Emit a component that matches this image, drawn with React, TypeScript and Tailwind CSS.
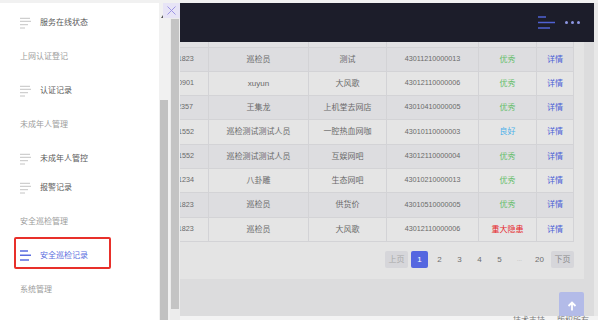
import React from "react";

type Row = { phone: string; name: string; place: string; id: string; status: string };

const rows: Row[] = [
  { phone: "13807311823", name: "巡检员", place: "测试", id: "43011210000013", status: "优秀" },
  { phone: "18673140901", name: "xuyun", place: "大风歌", id: "43012110000006", status: "优秀" },
  { phone: "15111112357", name: "王集龙", place: "上机堂去网店", id: "43010410000005", status: "优秀" },
  { phone: "13974881552", name: "巡检测试测试人员", place: "一腔热血网咖", id: "43010110000003", status: "良好" },
  { phone: "13974881552", name: "巡检测试测试人员", place: "互娱网吧", id: "43012110000004", status: "优秀" },
  { phone: "13900001234", name: "八卦雕", place: "生态网吧", id: "43010210000013", status: "优秀" },
  { phone: "13807311823", name: "巡检员", place: "供货价", id: "43010510000005", status: "优秀" },
  { phone: "13807311823", name: "巡检员", place: "大风歌", id: "43012110000006", status: "重大隐患" },
];

const statusClass: Record<string, string> = {
  优秀: "text-[#62bd68]",
  良好: "text-[#4fb2ea]",
  重大隐患: "text-[#e5262a]",
};

const rowHeights = ["h-[24px]", "h-[24px]", "h-[24px]", "h-[25px]", "h-[24px]", "h-[24px]", "h-[25px]", "h-[24px]"];

function MenuIcon({ active }: { active?: boolean }) {
  if (active) {
    return (
      <svg width="12" height="12" viewBox="0 0 12 12" className="shrink-0">
        <path d="M0 1h8M0 5.3h11M0 10h9" stroke="#5b6de0" strokeWidth="1.5" />
      </svg>
    );
  }
  return (
    <svg width="12" height="12" viewBox="0 0 12 12" className="shrink-0">
      <path d="M0 1.3h10M0 4.3h11M0 7.7h8M0 11h5" stroke="#c4c4c4" strokeWidth="1" />
    </svg>
  );
}

function Item({ label, active }: { label: string; active?: boolean }) {
  return (
    <div className="relative h-[29px] flex items-center pl-[20px]">
      <MenuIcon active={active} />
      <span className={`ml-[8px] text-[8px] leading-[8px] ${active ? "text-[#5b6de0]" : "text-[#5a5a5a]"}`}>{label}</span>
      {active && (
        <div className="absolute left-[14px] top-[-4px] w-[97px] h-[32px] border-2 border-[#e8302a] rounded-[2px]" />
      )}
    </div>
  );
}

function Group({ label }: { label: string }) {
  return (
    <div className="h-[39px] flex items-center pl-[20px] text-[8px] leading-[8px] text-[#9c9c9c]">{label}</div>
  );
}

export default function App() {
  const cell = "flex items-center justify-center border-r border-[#d3d3d6] whitespace-nowrap overflow-hidden";
  return (
    <div
      className="relative w-[598px] h-[320px] overflow-hidden bg-[#f1f1f1]"
      style={{ fontFamily: '"Liberation Sans", "Noto Sans CJK SC", sans-serif' }}
    >
      {/* main page under the overlay */}
      <div className="flex flex-col h-full">
        <div className="h-[3px] bg-[#f1f1f1]" />
        <div className="flex flex-1 min-h-0">
          <div className="w-[594px] flex flex-col">
            {/* dark header */}
            <div className="h-[39px] bg-[#1c1d2a] flex items-center justify-end pr-[14px]">
              <svg width="18" height="13" viewBox="0 0 18 13" className="mt-[0px]">
                <path d="M0 1h8M0 6.5h17M0 12h12" stroke="#4f62d4" strokeWidth="1.6" />
              </svg>
              <div className="flex gap-[3.2px] ml-[9px]">
                <span className="w-[3px] h-[3px] rounded-full bg-[#8c96e2]" />
                <span className="w-[3px] h-[3px] rounded-full bg-[#8c96e2]" />
                <span className="w-[3px] h-[3px] rounded-full bg-[#8c96e2]" />
              </div>
            </div>
            {/* body */}
            <div className="flex-1 bg-[#dcdcdd]">
              <div className="ml-[10px] mr-[10px] bg-[#e4e4e4] pl-[10px] pr-[10px]">
                <div className="grid grid-cols-[116px_73px_100px_78px_92px_58px_37px] h-[6px] bg-[#e1e1e3] border-b border-[#d3d3d6]">
                  {[0, 1, 2, 3, 4, 5, 6].map((i) => (
                    <div key={i} className="border-r border-[#d3d3d6]" />
                  ))}
                </div>
                {rows.map((r, i) => (
                  <div
                    key={i}
                    className={`grid grid-cols-[116px_73px_100px_78px_92px_58px_37px] ${rowHeights[i]} border-b border-[#d3d3d6] ${i % 2 === 0 ? "bg-[#dddde0]" : "bg-[#e5e5e5]"}`}
                  >
                    <div className={`${cell}`} />
                    <div className={`${cell} text-[7.2px] text-[#6a6a6a]`}>{r.phone}</div>
                    <div className={`${cell} text-[8px] text-[#6a6a6a]`}>{r.name}</div>
                    <div className={`${cell} text-[8px] text-[#6a6a6a]`}>{r.place}</div>
                    <div className={`${cell} text-[7.2px] text-[#6a6a6a]`}>{r.id}</div>
                    <div className={`${cell} text-[8px] ${statusClass[r.status]}`}>{r.status}</div>
                    <div className={`${cell} text-[8px] text-[#4a5fd6]`}>详情</div>
                  </div>
                ))}
                {/* pagination */}
                <div className="flex justify-end gap-[3px] pt-[9px] pb-[11px] text-[8px]">
                  <div className="w-[23px] h-[17px] flex items-center justify-center rounded-[2px] bg-[#d6d6da] text-[#a9a9a9]">上页</div>
                  <div className="w-[17px] h-[17px] flex items-center justify-center rounded-[2px] bg-[#5567e0] text-white">1</div>
                  {["2", "3", "4", "5", "...", "20"].map((p) => (
                    <div key={p} className="w-[17px] h-[17px] flex items-center justify-center text-[#6e6e6e]">
                      {p === "..." ? <span className="text-[#b0b0b0] text-[6px]">...</span> : p}
                    </div>
                  ))}
                  <div className="w-[23px] h-[17px] flex items-center justify-center rounded-[2px] bg-[#d6d6da] text-[#8a8a8a]">下页</div>
                </div>
              </div>
            </div>
          </div>
          <div className="w-[4px] bg-[#e8e8e8]" />
        </div>
        <div className="relative z-20 h-[4px] bg-[#f3f3f3] flex text-[8px] leading-[8px] text-[#7a7a7a] pt-[1px]">
          <span className="ml-[513px]">技术支持</span>
          <span className="ml-[12px]">版权所有</span>
        </div>
      </div>

      {/* back to top */}
      <div className="absolute left-[559px] top-[292px] w-[25px] h-[28px] rounded-[2px] bg-[#b3bbe8] flex justify-center pt-[9px] z-10">
        <svg width="10" height="10" viewBox="0 0 10 10">
          <path d="M5 9.5V1.5M1.5 5L5 1.5L8.5 5" stroke="white" strokeWidth="1.8" fill="none" />
        </svg>
      </div>

      {/* drawer */}
      <div className="absolute left-0 top-[3px] bottom-0 flex z-30">
        <div className="w-[159px] bg-white pt-[5px]">
          <Item label="服务在线状态" />
          <Group label="上网认证登记" />
          <Item label="认证记录" />
          <Group label="未成年人管理" />
          <Item label="未成年人管控" />
          <Item label="报警记录" />
          <Group label="安全巡检管理" />
          <Item label="安全巡检记录" active />
          <Group label="系统管理" />
        </div>
        {/* drawer scrollbar */}
        <div className="relative w-[11px] bg-[#f1f1f1]">
          <div className="absolute left-[2px] top-[12px] w-0 h-0 border-l-[2px] border-r-[2px] border-b-[3px] border-l-transparent border-r-transparent border-b-[#555]" />
          <div className="absolute left-[1px] right-[2px] top-[97px] bottom-0 bg-[#c1c1c1]" />
        </div>
        {/* outer scrollbar */}
        <div className="relative w-[10px] bg-[#ececec]">
          <div className="absolute left-[1px] right-[1px] top-[16px] h-[290px] bg-[#c4c4c4]" />
        </div>
      </div>

      {/* close button */}
      <div className="absolute left-[163px] top-[3px] w-[17px] h-[15px] bg-[#e7e4f6] flex items-center justify-center z-40">
        <svg width="9" height="9" viewBox="0 0 9 9">
          <path d="M0.5 0.5L8.5 8.5M8.5 0.5L0.5 8.5" stroke="#9d95e4" strokeWidth="1" />
        </svg>
      </div>
    </div>
  );
}
